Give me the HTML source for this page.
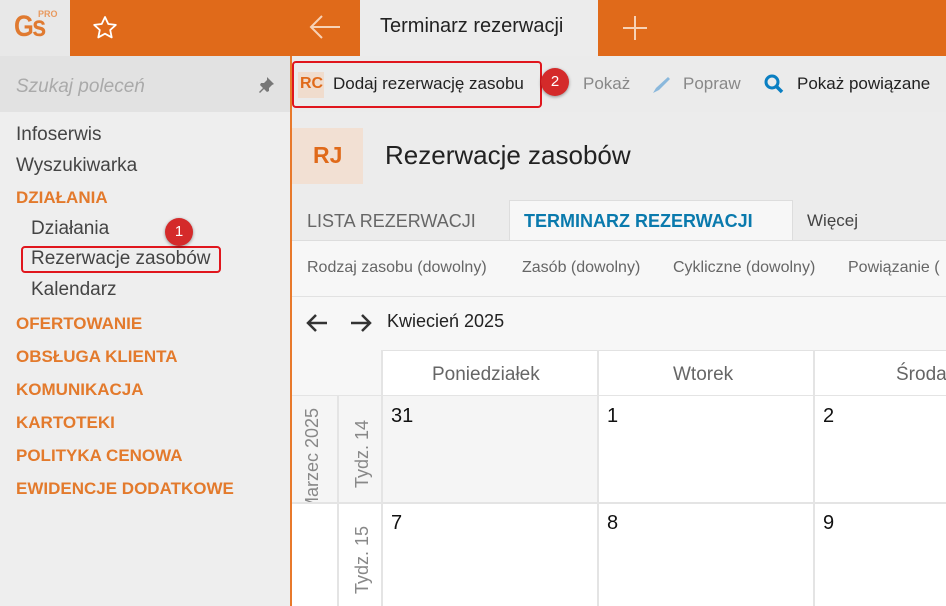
<!DOCTYPE html>
<html><head><meta charset="utf-8"><style>
*{box-sizing:border-box;margin:0;padding:0}
body{width:946px;height:606px;overflow:hidden;font-family:"Liberation Sans",sans-serif;background:#ececec;position:relative}
.a{position:absolute}
.or{background:#e06a1a}
.t{position:absolute;white-space:nowrap}
</style></head><body>
<div class="a" style="left:0;top:0;width:70px;height:56px;background:#e8e8e8"></div>
<div class="t" style="left:14px;top:10px;font-size:30px;font-weight:bold;color:#e07a30;letter-spacing:-2px;transform:scaleX(.85);transform-origin:0 0">Gs</div>
<div class="t" style="left:38px;top:9px;font-size:9px;color:#e89a60;font-weight:bold">PRO</div>
<div class="a or" style="left:70px;top:0;width:290px;height:56px"></div>
<svg class="a" style="left:92px;top:15px" width="26" height="26" viewBox="0 0 26 26"><path d="M13 2l3.3 7 7.5.9-5.6 5.1 1.5 7.4L13 18.7 6.3 22.4l1.5-7.4L2.2 9.9l7.5-.9z" fill="none" stroke="#fff" stroke-width="1.8" stroke-linejoin="round"/></svg>
<svg class="a" style="left:308px;top:14px" width="34" height="26" viewBox="0 0 34 26"><path d="M32 13H3M14 2L3 13l11 11" fill="none" stroke="#f7d2b6" stroke-width="2"/></svg>
<div class="a" style="left:360px;top:0;width:238px;height:56px;background:#ececec"></div>
<div class="t" style="left:380px;top:15px;font-size:20px;color:#222">Terminarz rezerwacji</div>
<div class="a or" style="left:598px;top:0;width:348px;height:56px"></div>
<svg class="a" style="left:622px;top:15px" width="26" height="26"><path d="M13 1v24M1 13h24" stroke="#f7d2b6" stroke-width="2"/></svg>
<div class="a" style="left:0;top:56px;width:290px;height:56px;background:#e2e2e2"></div>
<div class="t" style="left:16px;top:76px;font-size:19px;color:#aaa;font-style:italic">Szukaj poleceń</div>
<svg class="a" style="left:257px;top:76px" width="18" height="18" viewBox="0 0 18 18"><path d="M10 1l7 7-2 1-3 3 0 3-2 1-3-3-4 4-1-1 4-4-3-3 1-2 3 0 3-3z" fill="#777"/></svg>
<div class="a" style="left:0;top:112px;width:290px;height:494px;background:#eeeeee"></div>
<div class="t" style="left:16px;top:124px;font-size:19px;color:#444;line-height:22px">Infoserwis</div>
<div class="t" style="left:16px;top:155px;font-size:19px;color:#444;line-height:22px">Wyszukiwarka</div>
<div class="t" style="left:16px;top:187px;font-size:17px;color:#e37a2c;font-weight:bold;line-height:22px">DZIAŁANIA</div>
<div class="t" style="left:31px;top:218px;font-size:19px;color:#444;line-height:22px">Działania</div>
<div class="t" style="left:31px;top:248px;font-size:19px;color:#444;line-height:22px">Rezerwacje zasobów</div>
<div class="t" style="left:31px;top:279px;font-size:19px;color:#444;line-height:22px">Kalendarz</div>
<div class="t" style="left:16px;top:313px;font-size:17px;color:#e37a2c;font-weight:bold;line-height:22px">OFERTOWANIE</div>
<div class="t" style="left:16px;top:346px;font-size:17px;color:#e37a2c;font-weight:bold;line-height:22px">OBSŁUGA KLIENTA</div>
<div class="t" style="left:16px;top:379px;font-size:17px;color:#e37a2c;font-weight:bold;line-height:22px">KOMUNIKACJA</div>
<div class="t" style="left:16px;top:412px;font-size:17px;color:#e37a2c;font-weight:bold;line-height:22px">KARTOTEKI</div>
<div class="t" style="left:16px;top:445px;font-size:17px;color:#e37a2c;font-weight:bold;line-height:22px">POLITYKA CENOWA</div>
<div class="t" style="left:16px;top:478px;font-size:17px;color:#e37a2c;font-weight:bold;line-height:22px">EWIDENCJE DODATKOWE</div>
<div class="a" style="left:21px;top:246px;width:200px;height:27px;border:2px solid #e0161d;border-radius:4px"></div>
<div class="a" style="left:165px;top:218px;width:28px;height:28px;border-radius:50%;background:#d42a2a;color:#fff;font-size:15px;text-align:center;line-height:28px;box-shadow:0 1px 3px rgba(0,0,0,.4)">1</div>
<div class="a" style="left:290px;top:56px;width:2px;height:550px;background:#e8792b"></div>
<div class="a" style="left:292px;top:56px;width:654px;height:56px;background:#ebebeb"></div>
<div class="a" style="left:298px;top:72px;width:26px;height:26px;background:#f0dccd"></div>
<div class="t" style="left:300px;top:75px;font-size:16px;font-weight:bold;color:#e06a1a">RC</div>
<div class="t" style="left:333px;top:74px;font-size:17px;color:#222">Dodaj rezerwację zasobu</div>
<div class="a" style="left:292px;top:61px;width:250px;height:47px;border:2px solid #e0161d;border-radius:4px"></div>
<div class="a" style="left:541px;top:68px;width:28px;height:28px;border-radius:50%;background:#d42a2a;color:#fff;font-size:15px;text-align:center;line-height:28px;box-shadow:0 1px 3px rgba(0,0,0,.4)">2</div>
<div class="t" style="left:583px;top:74px;font-size:17px;color:#888">Pokaż</div>
<svg class="a" style="left:650px;top:74px" width="22" height="22"><path d="M3 19l3-5L18 3l2 2L9 16z" fill="#8ab8dc"/></svg>
<div class="t" style="left:683px;top:74px;font-size:17px;color:#888">Popraw</div>
<svg class="a" style="left:763px;top:73px" width="22" height="22"><circle cx="9" cy="9" r="6" fill="none" stroke="#0a7fc2" stroke-width="3"/><path d="M13 13l6 6" stroke="#0a7fc2" stroke-width="3.5"/></svg>
<div class="t" style="left:797px;top:74px;font-size:17px;color:#222">Pokaż powiązane</div>
<div class="a" style="left:292px;top:128px;width:71px;height:56px;background:#f2e0d3"></div>
<div class="t" style="left:313px;top:142px;font-size:23px;color:#e06a1a;font-weight:bold">RJ</div>
<div class="t" style="left:385px;top:140px;font-size:26px;color:#222">Rezerwacje zasobów</div>
<div class="t" style="left:307px;top:211px;font-size:18px;color:#666">LISTA REZERWACJI</div>
<div class="a" style="left:509px;top:200px;width:284px;height:42px;background:#f7f7f7;border:1px solid #ddd;border-bottom:none"></div>
<div class="t" style="left:524px;top:211px;font-size:18px;color:#0a7aad;font-weight:bold">TERMINARZ REZERWACJI</div>
<div class="t" style="left:807px;top:211px;font-size:17px;color:#444">Więcej</div>
<div class="a" style="left:292px;top:240px;width:654px;height:57px;background:#f7f7f7;border-top:1px solid #ddd;border-bottom:1px solid #e2e2e2"></div>
<div class="t" style="left:307px;top:259px;font-size:16px;color:#666">Rodzaj zasobu (dowolny)</div>
<div class="t" style="left:522px;top:259px;font-size:16px;color:#666">Zasób (dowolny)</div>
<div class="t" style="left:673px;top:259px;font-size:16px;color:#666">Cykliczne (dowolny)</div>
<div class="t" style="left:848px;top:259px;font-size:16px;color:#666">Powiązanie (</div>
<div class="a" style="left:292px;top:297px;width:654px;height:309px;background:#f7f7f7"></div>
<svg class="a" style="left:305px;top:312px" width="24" height="22"><path d="M22 11H3M11 3l-8 8 8 8" fill="none" stroke="#333" stroke-width="2.5"/></svg>
<svg class="a" style="left:349px;top:312px" width="24" height="22"><path d="M2 11h19M13 3l8 8-8 8" fill="none" stroke="#333" stroke-width="2.5"/></svg>
<div class="t" style="left:387px;top:311px;font-size:18px;color:#222">Kwiecień 2025</div>
<div class="a" style="left:382px;top:350px;width:564px;height:45px;background:#fff;border-top:1px solid #e2e2e2"></div>
<div class="a" style="left:292px;top:395px;width:654px;height:211px;background:#fff;border-top:2px solid #e4e4e4"></div>
<div class="a" style="left:292px;top:396px;width:645px;height:106px;background:#f5f5f5"></div>
<div class="a" style="left:598px;top:396px;width:348px;height:106px;background:#fff"></div>
<div class="a" style="left:292px;top:502px;width:654px;height:2px;background:#e4e4e4"></div>
<div class="a" style="left:337px;top:395px;width:2px;height:211px;background:#e4e4e4"></div>
<div class="a" style="left:381px;top:350px;width:2px;height:256px;background:#e4e4e4"></div>
<div class="a" style="left:597px;top:350px;width:2px;height:256px;background:#e4e4e4"></div>
<div class="a" style="left:813px;top:350px;width:2px;height:256px;background:#e4e4e4"></div>
<div class="t" style="left:432px;top:364px;font-size:19px;color:#666">Poniedziałek</div>
<div class="t" style="left:673px;top:364px;font-size:19px;color:#666">Wtorek</div>
<div class="t" style="left:896px;top:364px;font-size:19px;color:#666">Środa</div>
<div class="t" style="left:391px;top:405px;font-size:20px;color:#111">31</div>
<div class="t" style="left:607px;top:405px;font-size:20px;color:#111">1</div>
<div class="t" style="left:823px;top:405px;font-size:20px;color:#111">2</div>
<div class="t" style="left:391px;top:512px;font-size:20px;color:#111">7</div>
<div class="t" style="left:607px;top:512px;font-size:20px;color:#111">8</div>
<div class="t" style="left:823px;top:512px;font-size:20px;color:#111">9</div>
<div class="a" style="left:293px;top:397px;width:44px;height:105px;overflow:hidden">
<div class="t" style="left:9px;top:115px;font-size:18px;color:#888;transform:rotate(-90deg);transform-origin:0 0">Marzec 2025</div></div>
<div class="t" style="left:352px;top:488px;font-size:18px;color:#888;transform:rotate(-90deg);transform-origin:0 0">Tydz. 14</div>
<div class="t" style="left:352px;top:594px;font-size:18px;color:#888;transform:rotate(-90deg);transform-origin:0 0">Tydz. 15</div>
</body></html>
